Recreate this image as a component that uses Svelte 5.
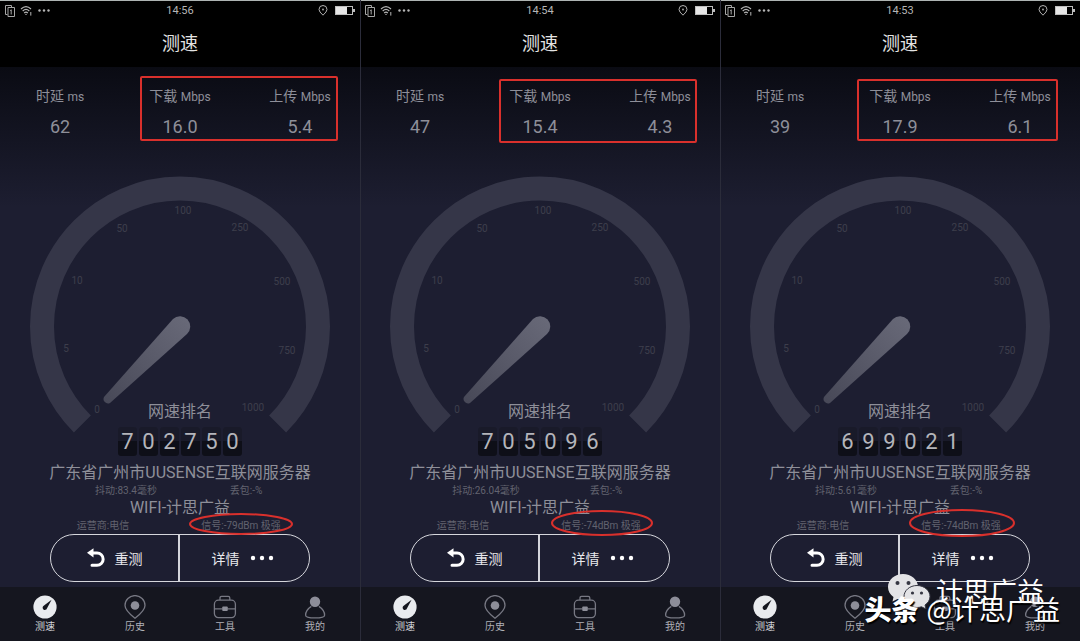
<script>
  const phones = [
    {
      time: '14:56',
      ping: 62,
      download: '16.0',
      upload: '5.4',
      rank: '702750',
      jitter: '83.4',
      signal: '-79dBm',
      box: { x: 141, y: 77, w: 196, h: 63 },
      ring: { cx: 241, cy: 524, rx: 51, ry: 10 }
    },
    {
      time: '14:54',
      ping: 47,
      download: '15.4',
      upload: '4.3',
      rank: '705096',
      jitter: '26.04',
      signal: '-74dBm',
      box: { x: 140, y: 80, w: 196, h: 62 },
      ring: { cx: 242, cy: 523, rx: 50, ry: 12 }
    },
    {
      time: '14:53',
      ping: 39,
      download: '17.9',
      upload: '6.1',
      rank: '699021',
      jitter: '5.61',
      signal: '-74dBm',
      box: { x: 138, y: 80, w: 199, h: 60 },
      ring: { cx: 242, cy: 523, rx: 52, ry: 13 }
    }
  ];

  const ticks = [
    { label: '0', x: 97, y: 413 },
    { label: '5', x: 66, y: 352 },
    { label: '10', x: 77, y: 284 },
    { label: '50', x: 122, y: 232 },
    { label: '100', x: 183, y: 214 },
    { label: '250', x: 240, y: 231 },
    { label: '500', x: 282, y: 285 },
    { label: '750', x: 287, y: 354 },
    { label: '1000', x: 253, y: 411 }
  ];
</script>

<main>
  {#each phones as phone}
    <section class="phone">
      <div class="status">
        <div class="status-left">
          <svg width="10" height="12" viewBox="0 0 10 12" fill="none" stroke="#a5a5a5">
            <path d="M2.5 9.5h-2v-9h6v2" />
            <path d="M3 2.5h6.5v9H3z" />
            <path d="M6.2 4.5v5M5.2 5.5h1" />
          </svg>
          <svg width="13" height="11" viewBox="0 0 13 11" fill="none" stroke="#b5b5b5" stroke-width="1.2">
            <path d="M1 4Q6 -0.8 11 4M2.7 6Q6 2.8 9.3 6M4.2 8Q6 6.2 7.8 8" />
            <circle cx="6" cy="9.4" r="0.7" fill="#b5b5b5" stroke="none" />
            <path d="M10.8 7v3.6" stroke-width="1" />
          </svg>
          <svg width="12" height="3" viewBox="0 0 12 3" fill="#b5b5b5">
            <circle cx="1.5" cy="1.5" r="1.2" />
            <circle cx="6" cy="1.5" r="1.2" />
            <circle cx="10.5" cy="1.5" r="1.2" />
          </svg>
        </div>
        <span class="time">{phone.time}</span>
        <div class="status-right">
          <svg width="10" height="11" viewBox="0 0 10 11" fill="none" stroke="#b0b0b0">
            <path d="M5 10.2Q1 6.7 1 4.5A4 4 0 0 1 9 4.5Q9 6.7 5 10.2z" />
            <circle cx="5" cy="4.5" r="0.9" fill="#b0b0b0" stroke="none" />
          </svg>
          <svg width="20" height="9" viewBox="0 0 20 9">
            <rect x="0.5" y="0.5" width="17" height="8" fill="none" stroke="#bdbdbd" />
            <rect x="1" y="1" width="11" height="7" fill="#e6e6e6" />
            <rect x="18" y="3" width="2" height="3" fill="#bdbdbd" />
          </svg>
        </div>
      </div>
      <h1>测速</h1>

      <div class="content">
        <dl class="stats">
          <div>
            <dt>时延 <small>ms</small></dt>
            <dd>{phone.ping}</dd>
          </div>
          <div>
            <dt>下载 <small>Mbps</small></dt>
            <dd>{phone.download}</dd>
          </div>
          <div>
            <dt>上传 <small>Mbps</small></dt>
            <dd>{phone.upload}</dd>
          </div>
        </dl>

        <svg class="gauge" viewBox="0 167 360 270">
          <defs>
            <linearGradient id="needle" x1="1" y1="0" x2="0" y2="1">
              <stop offset="0" stop-color="#696a79" />
              <stop offset="1" stop-color="#474857" />
            </linearGradient>
          </defs>
          <path class="arc" d="M82.4 424.1A138 138 0 1 1 277.6 424.1" />
          {#each ticks as tick}
            <text x={tick.x} y={tick.y}>{tick.label}</text>
          {/each}
          <path fill="url(#needle)" d="M173 319A10 10 0 1 1 187 334L110 403A4.5 4.5 0 0 1 104 397z" />
        </svg>

        <h2>网速排名</h2>
        <div class="rank">
          {#each phone.rank as digit}
            <span>{digit}</span>
          {/each}
        </div>
        <p class="server">广东省广州市UUSENSE互联网服务器</p>
        <div class="details quality">
          <span>抖动:{phone.jitter}毫秒</span>
          <span>丢包:-%</span>
        </div>
        <p class="server">WIFI-计思广益</p>
        <div class="details network">
          <span>运营商:电信</span>
          <span>信号:{phone.signal} 极强</span>
        </div>

        <div class="actions">
          <button>
            <svg width="18" height="20" viewBox="0 0 18 20">
              <path d="M4 5H10A6 6 0 0 1 10 17.3H5" fill="none" stroke="#fff" stroke-width="3" stroke-linecap="round" />
              <path d="M0 4.8L6.5 0.2V9.6z" fill="#fff" />
            </svg>
            重测
          </button>
          <button>
            详情
            <svg width="24" height="6" viewBox="0 0 24 6" fill="#fff">
              <circle cx="3" cy="3" r="2.2" />
              <circle cx="12" cy="3" r="2.2" />
              <circle cx="21" cy="3" r="2.2" />
            </svg>
          </button>
        </div>
      </div>

      <nav>
        <a class="active" href="#speed">
          <svg width="24" height="24" viewBox="0 0 24 24">
            <circle cx="12" cy="12" r="11.6" fill="#e9ebee" />
            <path d="M18.6 4.8L13.9 13.4A2.2 2.2 0 1 1 10.7 10.8z" fill="#15161f" />
          </svg>
          测速
        </a>
        <a href="#history">
          <svg width="24" height="24" viewBox="0 0 24 24" fill="none" stroke="#777883" stroke-width="1.3">
            <path d="M12 23.2Q2 15.4 2 10.4A10 9.8 0 0 1 22 10.4Q22 15.4 12 23.2z" />
            <circle cx="12" cy="10.5" r="4.3" fill="#8d8e99" stroke="none" />
          </svg>
          历史
        </a>
        <a href="#tools">
          <svg width="24" height="24" viewBox="0 0 24 24" fill="none" stroke="#777883" stroke-width="1.3">
            <rect x="1.4" y="5.2" width="21" height="17.4" rx="4" />
            <path d="M7 5V3Q7 1.4 8.6 1.4H15.2Q16.8 1.4 16.8 3V5M1.4 13.8H9.5M14.5 13.8H22.4" />
            <rect x="9.2" y="11.6" width="5.6" height="4.4" rx="1" fill="#8d8e99" stroke="none" />
          </svg>
          工具
        </a>
        <a href="#me">
          <svg width="24" height="24" viewBox="0 0 24 24" fill="none" stroke="#777883" stroke-width="1.3">
            <path d="M8.3 11.4Q2.6 15.2 2.6 20.2Q2.6 22.9 12 22.9Q21.6 22.9 21.6 20.2Q21.6 15.2 15.9 11.4" />
            <circle cx="12" cy="6.8" r="5.2" fill="#8d8e99" stroke="none" />
          </svg>
          我的
        </a>
      </nav>

      <!-- red marks over the figures being compared -->
      <svg class="marks" viewBox="0 0 360 641">
        <rect x={phone.box.x} y={phone.box.y} width={phone.box.w} height={phone.box.h} rx="1" />
        <ellipse cx={phone.ring.cx} cy={phone.ring.cy} rx={phone.ring.rx} ry={phone.ring.ry} />
      </svg>
    </section>
  {/each}

  <div class="wechat">
    <svg width="43" height="36" viewBox="0 0 43 36">
      <path d="M15 1C6.7 1 0 6.8 0 14C0 18.2 2.2 21.6 5.5 24L4.5 28.5L9.5 26A17 17 0 0 0 15 27C23.3 27 30 21.2 30 14S23.3 1 15 1z" fill="#e3e3e6" />
      <circle cx="9.5" cy="10" r="2" fill="#353642" />
      <circle cx="20.5" cy="10" r="2" fill="#353642" />
      <path d="M29 12.5C21.8 12.5 16 17.5 16 23.5S21.8 34.5 29 34.5A14 14 0 0 0 33.5 33.8L38 36L37 32C40 30 42 27 42 23.5C42 17.5 36.2 12.5 29 12.5z" fill="#e3e3e6" stroke="#353642" stroke-width="1" />
      <circle cx="24.5" cy="20" r="1.6" fill="#353642" />
      <circle cx="33.5" cy="20" r="1.6" fill="#353642" />
    </svg>
    <span>计思广益</span>
  </div>
  <div class="toutiao"><b>头条</b><span>@计思广益</span></div>
</main>

<style>
  :global(body) {
    margin: 0;
    background: #1d1e31;
  }

  main {
    position: relative;
    display: grid;
    grid-template-columns: repeat(3, 1fr);
    font-family: Roboto, 'Noto Sans CJK SC', sans-serif;
    overflow: hidden;
  }

  h1, h2, p, dl, dd {
    margin: 0;
    font-weight: 400;
  }

  svg {
    display: block;
    flex-shrink: 0;
  }

  .phone {
    position: relative;
    color: #8e8f99;
    background: #1d1e31;
  }

  .phone + .phone::before {
    content: '';
    position: absolute;
    top: 0;
    bottom: 0;
    left: 0;
    border-left: 1px solid #2b2c3a;
  }

  .status {
    display: grid;
    grid-template-columns: 1fr auto 1fr;
    align-items: center;
    height: 19px;
    padding: 0 5px;
    border-top: 1px solid #aeb4b3;
    background: #000;
    color: #b5b5b5;
    font-size: 11px;
  }

  .status-left, .status-right {
    display: flex;
    align-items: center;
    gap: 5px;
  }

  .status-right {
    justify-content: flex-end;
    gap: 7px;
  }

  h1 {
    background: #000;
    color: #e4e4e4;
    font-size: 18px;
    line-height: 47px;
    text-align: center;
  }

  .content {
    padding: 19px 0 5px;
    background: linear-gradient(#0a0b13, #1d1e31 140px);
    text-align: center;
  }

  .stats {
    display: grid;
    grid-template-columns: repeat(3, 1fr);
    line-height: 20px;
  }

  .stats div {
    display: grid;
    gap: 10px;
  }

  dt {
    font-size: 14px;
  }

  dt small {
    font-size: 12px;
  }

  dd {
    font-size: 18px;
  }

  .gauge {
    width: 100%;
    margin: 30px 0 -35px;
  }

  .gauge text {
    fill: #3d3e4c;
    font-size: 10px;
    text-anchor: middle;
  }

  .arc {
    fill: none;
    stroke: #353648;
    stroke-width: 24px;
  }

  h2 {
    position: relative;
    font-size: 16px;
    line-height: 20px;
  }

  .rank {
    display: flex;
    justify-content: center;
    gap: 2px;
    margin: 5px 0 8px;
  }

  .rank span {
    width: 19px;
    border-radius: 3px;
    background: linear-gradient(#191a29 50%, #0e0f18 50%);
    color: #b4b5bb;
    font-size: 22px;
    line-height: 29px;
  }

  .server {
    font-size: 16px;
    line-height: 18px;
  }

  .details {
    display: grid;
    grid-template-columns: 1fr 1fr;
    color: #62636f;
    font-size: 10px;
    line-height: 17px;
  }

  .quality {
    padding: 0 54px 0 66px;
  }

  .network {
    padding: 0 50px 0 34px;
  }

  .actions {
    display: grid;
    grid-template-columns: 1fr 1fr;
    height: 46px;
    margin: 0 50px;
    border: 1px solid #d5d6dc;
    border-radius: 24px;
  }

  button {
    display: flex;
    align-items: center;
    justify-content: center;
    gap: 10px;
    padding: 0;
    border: 0;
    background: none;
    color: #e8e8ec;
    font: inherit;
    font-size: 14px;
  }

  button:first-child {
    border-right: 2px solid #d5d6dc;
  }

  button:last-child {
    padding-right: 4px;
  }

  nav {
    display: grid;
    grid-template-columns: repeat(4, 1fr);
    padding: 8px 0 7px;
    background: #15161f;
  }

  nav a {
    display: grid;
    justify-items: center;
    color: #b0b1b8;
    font-size: 10px;
    line-height: 16px;
    text-decoration: none;
  }

  nav .active {
    color: #d4d5da;
  }

  .marks {
    position: absolute;
    top: 0;
    left: 0;
    width: 100%;
    fill: none;
    stroke: #d9302c;
    stroke-width: 2px;
    pointer-events: none;
  }

  .wechat, .toutiao {
    position: absolute;
    display: flex;
    align-items: center;
    color: #fff;
    font-family: 'Noto Sans CJK SC', sans-serif;
    line-height: 32px;
    white-space: nowrap;
  }

  .wechat {
    right: 36px;
    bottom: 33px;
    gap: 5px;
    font-size: 27px;
  }

  .toutiao {
    right: 20px;
    bottom: 17px;
    gap: 8px;
    font-size: 27px;
    text-shadow: 1px 2px 1px #000;
  }

  .toutiao b {
    font-weight: 900;
  }
</style>
